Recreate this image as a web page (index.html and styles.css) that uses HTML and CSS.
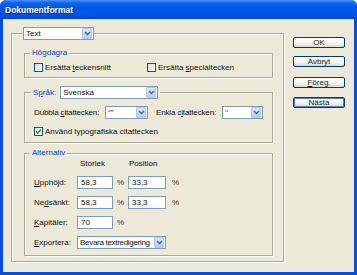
FILE: index.html
```html
<!DOCTYPE html>
<html lang="sv">
<head>
<meta charset="utf-8">
<title>Dokumentformat</title>
<link rel="stylesheet" href="styles.css">
</head>
<body>
<div class="window">
  <div class="titlebar"><span class="title">Dokumentformat</span></div>
  <div class="client">
    <div class="group outer">
      <div class="legend legend-top">
        <div class="select w-text"><span class="val">Text</span><span class="arrow"><svg width="7" height="5" viewBox="0 0 7 5"><path d="M1 1l2.5 2.5L6 1" stroke="#4d6185" stroke-width="1.4" fill="none"/></svg></span></div>
      </div>

      <div class="group hog">
        <div class="legend lg-hog"><span class="lg">Högdagra</span></div>
        <div class="row checks">
          <div class="check c1"><span class="box"></span><span>Ersätta <u>t</u>eckensnitt</span></div>
          <div class="check"><span class="box"></span><span>Ersätta <u>s</u>pecialtecken</span></div>
        </div>
      </div>

      <div class="group sprak">
        <div class="legend lg-sprak"><span class="lg">S<u>p</u>råk:</span>
          <div class="select w-sv"><span class="val">Svenska</span><span class="arrow"><svg width="7" height="5" viewBox="0 0 7 5"><path d="M1 1l2.5 2.5L6 1" stroke="#4d6185" stroke-width="1.4" fill="none"/></svg></span></div>
        </div>
        <div class="row quotes">
          <span class="qlabel">Dubbla <u>c</u>itattecken:</span>
          <div class="select w-q1"><span class="val">“”</span><span class="arrow"><svg width="7" height="5" viewBox="0 0 7 5"><path d="M1 1l2.5 2.5L6 1" stroke="#4d6185" stroke-width="1.4" fill="none"/></svg></span></div>
          <span class="qlabel2">Enkla c<u>i</u>tattecken:</span>
          <div class="select w-q2"><span class="val">‘’</span><span class="arrow"><svg width="7" height="5" viewBox="0 0 7 5"><path d="M1 1l2.5 2.5L6 1" stroke="#4d6185" stroke-width="1.4" fill="none"/></svg></span></div>
        </div>
        <div class="row checks2">
          <div class="check"><span class="box checked"><svg width="7" height="7" viewBox="0 0 7 7"><path d="M1 3.2l1.8 1.8L6 1.5" stroke="#21a121" stroke-width="1.5" fill="none"/></svg></span><span>Använd typografiska citattecken</span></div>
        </div>
      </div>

      <div class="group alt">
        <div class="legend lg-alt"><span class="lg">Alternativ</span></div>
        <div class="grid">
          <span></span><span class="hdr h1">Storlek</span><span></span><span class="hdr h2">Position</span><span></span>

          <span class="lbl"><u>U</u>pphöjd:</span>
          <div class="input">58,3</div><span class="pct">%</span>
          <div class="input">33,3</div><span class="pct p2">%</span>

          <span class="lbl">Ne<u>d</u>sänkt:</span>
          <div class="input">58,3</div><span class="pct">%</span>
          <div class="input">33,3</div><span class="pct p2">%</span>

          <span class="lbl"><u>K</u>apitäler:</span>
          <div class="input">70</div><span class="pct">%</span>
          <span></span><span></span>

          <span class="lbl"><u>E</u>xportera:</span>
          <div class="select w-exp"><span class="val tight">Bevara textredigering</span><span class="arrow"><svg width="7" height="5" viewBox="0 0 7 5"><path d="M1 1l2.5 2.5L6 1" stroke="#4d6185" stroke-width="1.4" fill="none"/></svg></span></div>
        </div>
      </div>
    </div>

    <div class="buttons">
      <div class="btn">OK</div>
      <div class="btn b2">Avbryt</div>
      <div class="btn b3"><span><u>F</u>öreg.</span></div>
      <div class="btn b4 default">Nästa</div>
    </div>
  </div>
</div>
</body>
</html>
```

FILE: styles.css
```css
* { box-sizing: border-box; }
html, body { margin: 0; padding: 0; }
body {
  width: 357px;
  height: 275px;
  overflow: hidden;
  background: #ffffff;
  font-family: "Liberation Sans", Arial, sans-serif;
  font-size: 8px;
  line-height: 1;
  color: #111;
}
u { text-decoration: underline; text-underline-offset: 1px; }

.window {
  width: 357px;
  height: 275px;
  display: flex;
  flex-direction: column;
  background: #0a4be0;
  border-radius: 6px 6px 0 0;
  overflow: hidden;
}
.titlebar {
  height: 19px;
  flex: none;
  display: flex;
  align-items: center;
  padding: 2px 0 0 5px;
  background: linear-gradient(to bottom, #4a97fb 0%, #1a66ee 12%, #0057e6 35%, #0055e4 70%, #0050dc 90%, #0040cc 100%);
}
.title {
  color: #ffffff;
  font-weight: bold;
  font-size: 8.5px;
  text-shadow: 1px 1px 0 #0b2a8a;
}
.client {
  flex: 1;
  margin: 0 3px 3px 3px;
  background: #ece9d8;
  display: flex;
  align-items: flex-start;
}

/* group boxes */
.group {
  border: 1px solid #aca899;
  box-shadow: 1px 1px 0 #ffffff, inset 1px 1px 0 #ffffff;
}
.legend {
  display: flex;
  align-items: center;
  width: max-content;
  background: #ece9d8;
  padding: 0 2px;
}
.lg { color: #0046d5; }

.outer {
  margin: 14px 0 0 8px;
  width: 273px;
  padding: 0 10px 5px 12px;
}
.legend-top { margin: -7px 0 0 -1px; padding: 0; height: 13px; }

.hog { margin-top: 13px; padding: 0 6px 4px 9px; }
.lg-hog { height: 10px; margin: -6px 0 0 -4px; }

.sprak { margin-top: 14px; padding: 0 6px 5px 9px; }
.lg-sprak { height: 13px; margin: -7px 0 0 -3px; gap: 4px; }

.alt { margin-top: 10px; padding: 0 6px 6px 9px; }
.lg-alt { height: 10px; margin: -6px 0 0 -4px; }

.row { display: flex; align-items: center; }
.checks { margin-top: 4px; height: 11px; }
.quotes { margin-top: 7px; height: 13px; }
.checks2 { margin-top: 7px; height: 11px; }

.check { display: flex; align-items: center; gap: 2px; }
.c1 { width: 113px; }
.box {
  width: 9px;
  height: 9px;
  border: 1px solid #1c5180;
  background: linear-gradient(135deg, #dcdcd7, #ffffff);
  display: flex;
  align-items: center;
  justify-content: center;
}

.qlabel { width: 71px; letter-spacing: -0.15px; }
.qlabel2 { width: 66px; margin-left: 8px; letter-spacing: -0.15px; }

/* controls */
.select {
  height: 13px;
  border: 1px solid #7f9db9;
  background: #ffffff;
  display: flex;
  align-items: center;
  padding: 1px 1px 1px 2px;
}
.select .val { flex: 1; white-space: nowrap; overflow: hidden; }
.select .tight { letter-spacing: -0.3px; }
.arrow {
  width: 10px;
  height: 11px;
  flex: none;
  border-radius: 1px;
  background: linear-gradient(to bottom, #dbe6fd, #b9cdf8);
  border: 1px solid #b2c5ef;
  display: flex;
  align-items: center;
  justify-content: center;
}
.w-text { width: 71px; }
.w-sv { width: 98px; }
.w-q1 { width: 43px; }
.w-q2 { width: 41px; }
.w-exp { width: 89px; grid-column: 2 / 5; }

.grid {
  margin-top: 1px;
  display: grid;
  grid-template-columns: 43px 36px 15px 38px 20px;
  grid-template-rows: 10px 13px 13px 13px 13px;
  row-gap: 7px;
  align-items: center;
}
.hdr { align-self: center; }
.h1 { padding-left: 3px; }
.h2 { padding-left: 1px; }
.lbl { white-space: nowrap; }
.input {
  height: 13px;
  border: 1px solid #7f9db9;
  background: #ffffff;
  display: flex;
  align-items: center;
  padding-left: 3px;
}
.pct { padding-left: 4px; color: #333; }
.p2 { padding-left: 6px; }

/* buttons */
.buttons {
  margin: 18px 0 0 9px;
  display: flex;
  flex-direction: column;
}
.btn {
  width: 52px;
  height: 11px;
  border: 1px solid #003c74;
  border-radius: 2px;
  background: linear-gradient(to bottom, #ffffff 0%, #f4f3ee 60%, #dcd8cc 100%);
  display: flex;
  align-items: center;
  justify-content: center;
  color: #222;
}
.b2 { margin-top: 8px; }
.b3 { margin-top: 10px; }
.b4 { margin-top: 9px; }
.default { box-shadow: inset 0 0 0 1px #5a7fc8; }
```
